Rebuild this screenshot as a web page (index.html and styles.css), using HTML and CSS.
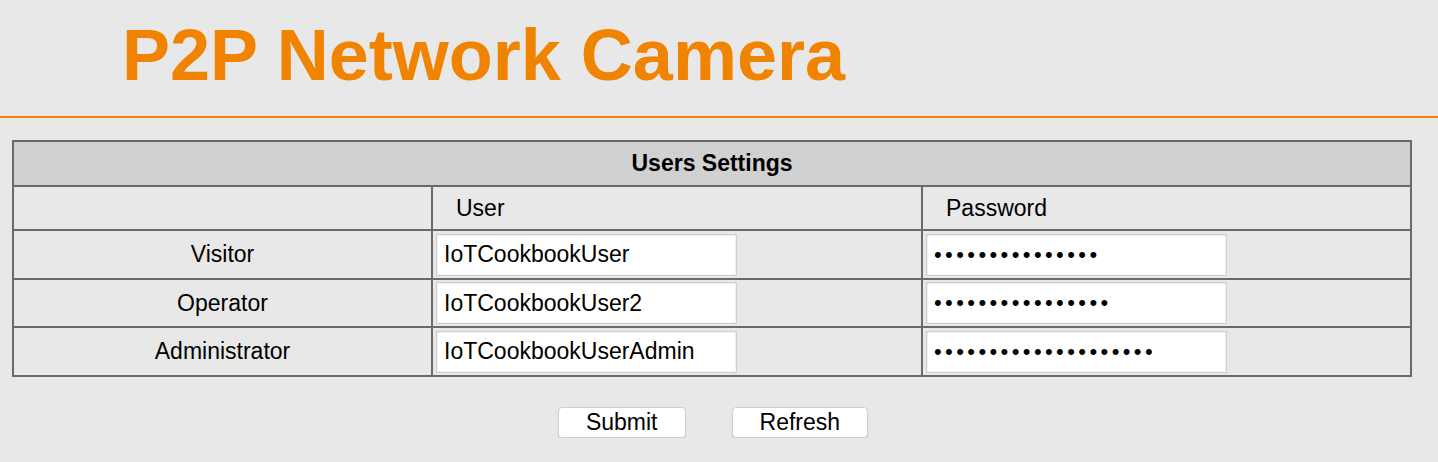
FILE: index.html
```html
<!DOCTYPE html>
<html>
<head>
<meta charset="utf-8">
<title>P2P Network Camera</title>
<link rel="stylesheet" href="styles.css">
</head>
<body>
<header class="top">
  <h1 class="brand">P2P Network Camera</h1>
</header>
<main class="content">
  <table class="users">
    <colgroup>
      <col class="c1"><col class="c2"><col class="c3">
    </colgroup>
    <tr class="r-title"><th colspan="3">Users Settings</th></tr>
    <tr class="r-head"><td></td><td class="lbl">User</td><td class="lbl">Password</td></tr>
    <tr class="r-a"><td class="role">Visitor</td><td class="fld"><input class="inp" type="text" value="IoTCookbookUser"></td><td class="fld"><input class="inp pw" type="password" value="xxxxxxxxxxxxxxx"></td></tr>
    <tr class="r-b"><td class="role">Operator</td><td class="fld"><input class="inp" type="text" value="IoTCookbookUser2"></td><td class="fld"><input class="inp pw" type="password" value="xxxxxxxxxxxxxxxx"></td></tr>
    <tr class="r-a"><td class="role">Administrator</td><td class="fld"><input class="inp" type="text" value="IoTCookbookUserAdmin"></td><td class="fld"><input class="inp pw" type="password" value="xxxxxxxxxxxxxxxxxxxx"></td></tr>
  </table>
  <div class="actions">
    <button class="btn" type="button">Submit</button>
    <button class="btn" type="button">Refresh</button>
  </div>
</main>
</body>
</html>
```
FILE: styles.css
```css
html, body {
  margin: 0;
  padding: 0;
  background: #e8e8e8;
  font-family: "Liberation Sans", Arial, sans-serif;
  color: #000;
}

.top {
  height: 118px;
  border-bottom: 2px solid #f08300;
  box-sizing: border-box;
  padding: 19px 0 0 122px;
}

.brand {
  margin: 0;
  font-size: 72px;
  line-height: 72px;
  font-weight: bold;
  color: #f08300;
}

.content {
  padding: 22px 26px 0 12px;
}

.users {
  width: 1398px;
  border-collapse: collapse;
  table-layout: fixed;
  font-size: 23px;
}

.c1 { width: 419px; }
.c2 { width: 490px; }
.c3 { width: 489px; }

.users th,
.users td {
  border: 2px solid #6a6a6a;
  padding: 0;
  vertical-align: middle;
}

.r-title th {
  height: 43px;
  background-color: #d0d0d0;
  background-image: radial-gradient(circle, #dadada 0.5px, transparent 0.7px);
  background-size: 3px 9px;
  font-weight: bold;
  text-align: center;
}

.r-head td { height: 42px; }
.r-a td { height: 47px; }
.r-b td { height: 46px; }

.lbl {
  padding-left: 23px !important;
}

.role {
  text-align: center;
}

.fld {
  padding-left: 3px !important;
}

.inp {
  display: block;
  box-sizing: border-box;
  width: 301px;
  height: 42px;
  margin: 0;
  padding: 0 7px;
  border: 1px solid #cfcfcf;
  outline: 1px dotted #e4e4e4;
  outline-offset: -2px;
  background: #fff;
  font-family: "Liberation Sans", Arial, sans-serif;
  font-size: 23px;
  color: #000;
}

.pw {
  letter-spacing: 3.4px;
  font-size: 22px;
}

.actions {
  width: 1398px;
  display: flex;
  justify-content: center;
  gap: 46px;
  margin-top: 30px;
  padding-left: 2px;
}

.btn {
  height: 31px;
  padding: 0 27px;
  border: 1px solid #cfcfcf;
  border-radius: 4px;
  background: #fff;
  box-shadow: 0 1px 1px rgba(0, 0, 0, 0.12);
  font-family: "Liberation Sans", Arial, sans-serif;
  font-size: 23px;
  line-height: 29px;
  color: #000;
}
```
